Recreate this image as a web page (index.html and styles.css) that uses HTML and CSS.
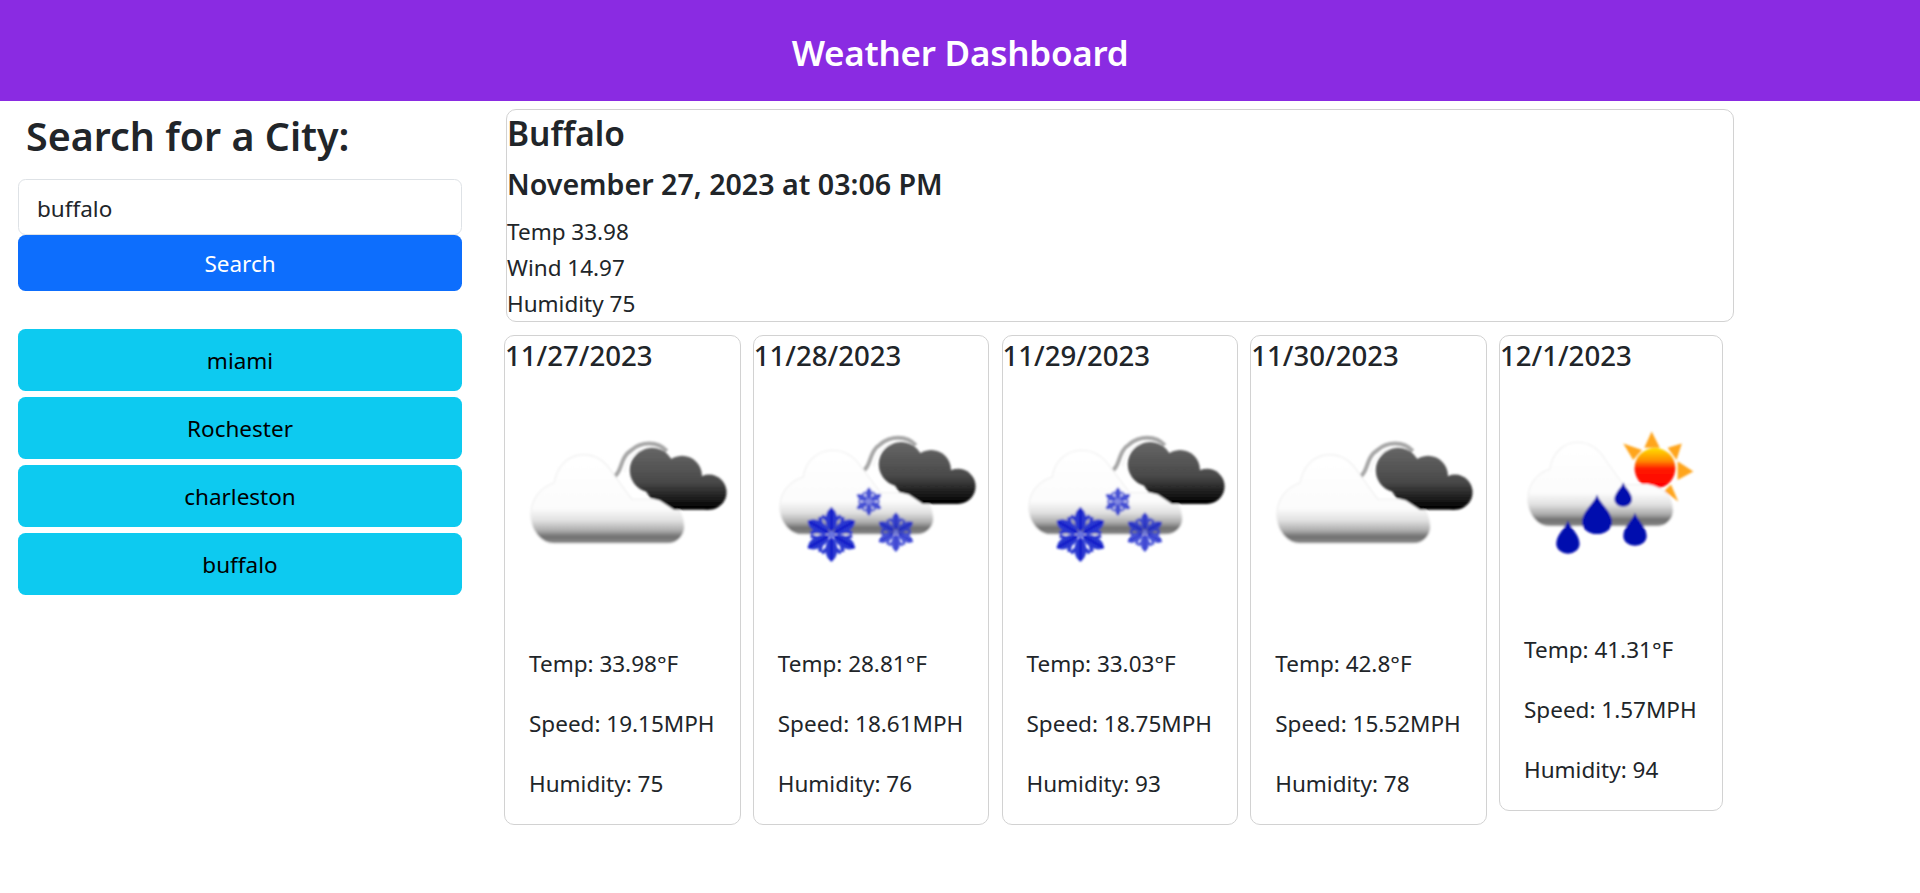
FILE: index.html
```html
<!DOCTYPE html>
<html lang="en">
<head>
<meta charset="utf-8">
<title>Weather Dashboard</title>
<link rel="stylesheet" href="styles.css">
</head>
<body>
<svg class="defs" aria-hidden="true">
  <defs>
    <filter id="soft" x="-10%" y="-10%" width="120%" height="120%"><feGaussianBlur stdDeviation="0.55"/></filter>
    <linearGradient id="whiteGrad" gradientUnits="userSpaceOnUse" x1="0" y1="28" x2="0" y2="66">
      <stop offset="0" stop-color="#fff"/><stop offset=".6" stop-color="#fcfcfc"/><stop offset=".74" stop-color="#e0e0e0"/>
      <stop offset=".85" stop-color="#adadad"/><stop offset=".92" stop-color="#707070"/><stop offset=".98" stop-color="#858585"/><stop offset="1" stop-color="#c8c8c8"/>
    </linearGradient>
    <linearGradient id="darkGrad" gradientUnits="userSpaceOnUse" x1="0" y1="25" x2="0" y2="51">
      <stop offset="0" stop-color="#666"/><stop offset=".55" stop-color="#4a4a4a"/><stop offset=".85" stop-color="#1a1a1a"/><stop offset="1" stop-color="#000"/>
    </linearGradient>
    <linearGradient id="sunGrad" gradientUnits="userSpaceOnUse" x1="0" y1="27" x2="0" y2="45">
      <stop offset="0" stop-color="#ffd800"/><stop offset=".3" stop-color="#ff8a00"/><stop offset=".5" stop-color="#ff1800"/><stop offset="1" stop-color="#f00"/>
    </linearGradient>
    <g id="cloudWhite">
      <path fill="url(#whiteGrad)" stroke="#efefef" stroke-width=".5" d="M21 66C15 66 11 60 11 54C11 47 15 42 21 40C22 33 27 28 33.5 28C39 28 43 31 46 36L54 47L65 47C72 48 76.5 53 76.5 59C76.5 63 73 66 69 66Z"/>
    </g>
    <g id="cloudDark">
      <path fill="none" stroke="#a6a6a6" stroke-width="1.7" d="M47 37C50 35 49 29 54 26C58 22.5 65 22 69 26.5"/>
      <path fill="none" stroke="#f4f4f4" stroke-width=".6" d="M51 35.5C51.5 30.5 55 27 59 25.8"/>
      <g fill="url(#darkGrad)">
        <circle cx="62.7" cy="34.6" r="9.5"/>
        <circle cx="75.5" cy="37" r="8.5"/>
        <circle cx="87" cy="44" r="7.5"/>
        <path d="M55 36L87 40L87 51.5L72 51.5L66 47.5L62 46.5Z"/>
      </g>
    </g>
    <g id="spoke">
      <ellipse cx="0" cy="-6.4" rx="2.5" ry="4.8" fill="#2a38d0"/>
      <path d="M0-4.5L-4-8M0-4.5L4-8" stroke="#2a38d0" stroke-width="1.5" fill="none"/>
      <path d="M0 0V-11.5" stroke="#0a14c8" stroke-width="1"/>
    </g>
    <g id="flake">
      <use href="#spoke"/>
      <use href="#spoke" transform="rotate(60)"/>
      <use href="#spoke" transform="rotate(120)"/>
      <use href="#spoke" transform="rotate(180)"/>
      <use href="#spoke" transform="rotate(240)"/>
      <use href="#spoke" transform="rotate(300)"/>
      <circle r="1.4" fill="#6a74e0"/>
    </g>
    <path id="drop" fill="#0008ae" d="M0-10C1 -6 5 -3 5 2A5 5 0 0 1-5 2C-5-3-1-6 0-10Z"/>
    <symbol id="iconCloud" viewBox="0 0 100 100">
      <g filter="url(#soft)"><use href="#cloudWhite"/><use href="#cloudDark"/></g>
    </symbol>
    <symbol id="iconSnow" viewBox="0 0 100 100">
      <g filter="url(#soft)">
        <g transform="translate(0 -2.5)"><use href="#cloudWhite" transform="translate(0 2) scale(1 .95)"/><use href="#cloudDark"/></g>
        <use href="#flake" transform="translate(33 62)"/>
        <use href="#flake" transform="translate(49 48) scale(.52)" opacity=".8"/>
        <use href="#flake" transform="translate(60.5 61) scale(.72)" opacity=".85"/>
      </g>
    </symbol>
    <symbol id="iconRain" viewBox="0 0 100 100">
      <g filter="url(#soft)">
        <g fill="#ffa51f">
          <path d="M65 26.5L68.3 19.2L72 26.5Z"/><path d="M75.5 26.5L81.9 24.5L79.5 32Z"/><path d="M80 32.5L87.1 37.2L80 41Z"/>
          <path d="M77 43L80.3 50.7L74 46Z"/><path d="M60 32L55.5 24.5L64 27.5Z"/>
        </g>
        <circle cx="69.8" cy="35.7" r="9.2" fill="url(#sunGrad)"/>
        <use href="#cloudWhite" transform="translate(1.5 -4)"/>
        <use href="#drop" transform="translate(43.7 58) scale(1.35 1.05)"/>
        <use href="#drop" transform="translate(55.5 48.5) scale(.8 .65)"/>
        <use href="#drop" transform="translate(60.8 64.5) scale(1.05 .88)"/>
        <use href="#drop" transform="translate(30.6 68) scale(1.05 .88)"/>
      </g>
    </symbol>
  </defs>
</svg>
<header class="banner"><h1 class="banner-title">Weather Dashboard</h1></header>
<div class="layout">
  <aside class="sidebar">
    <h2 class="search-heading">Search for a City:</h2>
    <form class="search-form">
      <input class="search-input" type="text" value="buffalo">
      <button class="btn btn-primary" type="button">Search</button>
    </form>
    <div class="history">
      <button class="btn btn-history" type="button">miami</button>
      <button class="btn btn-history" type="button">Rochester</button>
      <button class="btn btn-history" type="button">charleston</button>
      <button class="btn btn-history" type="button">buffalo</button>
    </div>
  </aside>
  <main class="content">
    <section class="current">
      <h2 class="current-city">Buffalo</h2>
      <h3 class="current-date">November 27, 2023 at 03:06 PM</h3>
      <p class="current-line">Temp 33.98</p>
      <p class="current-line">Wind 14.97</p>
      <p class="current-line">Humidity 75</p>
    </section>
    <section class="forecast">
      <article class="day">
        <h4 class="day-date">11/27/2023</h4>
        <svg class="day-icon" viewBox="0 0 100 100"><use href="#iconCloud"/></svg>
        <div class="day-body"><p>Temp: 33.98°F</p><p>Speed: 19.15MPH</p><p>Humidity: 75</p></div>
      </article>
      <article class="day">
        <h4 class="day-date">11/28/2023</h4>
        <svg class="day-icon" viewBox="0 0 100 100"><use href="#iconSnow"/></svg>
        <div class="day-body"><p>Temp: 28.81°F</p><p>Speed: 18.61MPH</p><p>Humidity: 76</p></div>
      </article>
      <article class="day">
        <h4 class="day-date">11/29/2023</h4>
        <svg class="day-icon" viewBox="0 0 100 100"><use href="#iconSnow"/></svg>
        <div class="day-body"><p>Temp: 33.03°F</p><p>Speed: 18.75MPH</p><p>Humidity: 93</p></div>
      </article>
      <article class="day">
        <h4 class="day-date">11/30/2023</h4>
        <svg class="day-icon" viewBox="0 0 100 100"><use href="#iconCloud"/></svg>
        <div class="day-body"><p>Temp: 42.8°F</p><p>Speed: 15.52MPH</p><p>Humidity: 78</p></div>
      </article>
      <article class="day day-narrow">
        <h4 class="day-date">12/1/2023</h4>
        <svg class="day-icon" viewBox="0 0 100 100"><use href="#iconRain"/></svg>
        <div class="day-body"><p>Temp: 41.31°F</p><p>Speed: 1.57MPH</p><p>Humidity: 94</p></div>
      </article>
    </section>
  </main>
</div>
</body>
</html>
```

FILE: styles.css
```css
* { box-sizing: border-box; }
html, body { margin: 0; padding: 0; }
body {
  font-family: "Noto Sans", "Open Sans", sans-serif;
  font-size: 22.5px;
  line-height: 30px;
  color: #212529;
  background: #fff;
}
.defs { display: block; width: 0; height: 0; }
h1, h2, h3, h4, p { margin: 0; }

.banner {
  height: 101px;
  padding-top: 4px;
  background: #8a2be2;
  display: flex;
  align-items: center;
  justify-content: center;
}
.banner-title {
  font-size: 35px;
  line-height: 42px;
  font-weight: 600;
  color: #fff;
  letter-spacing: -0.25px;
}

.layout {
  display: flex;
  align-items: flex-start;
  padding-left: 18px;
}
.sidebar {
  width: 444px;
  flex: none;
  margin-right: 42px;
}
.search-heading {
  font-size: 39.4px;
  line-height: 48px;
  font-weight: 600;
  padding: 11px 0 0 8px;
  margin-bottom: 19px;
}
.search-form { display: flex; flex-direction: column; }
.search-input {
  height: 56px;
  width: 100%;
  padding: 2px 18px 0;
  border: 1px solid #dee2e6;
  border-radius: 7.5px;
  font: inherit;
  color: #212529;
  background: #fff;
  outline: none;
}
.btn {
  display: block;
  width: 100%;
  border: 0;
  border-radius: 7.5px;
  padding: 2px 0 0;
  font: inherit;
  text-align: center;
}
.btn-primary {
  height: 56px;
  background: #0d6efd;
  color: #fff;
}
.history {
  display: flex;
  flex-direction: column;
  gap: 6px;
  margin-top: 38px;
}
.btn-history {
  height: 62px;
  background: #0dcaf0;
  color: #000;
}

.content { width: 1232px; flex: none; }
.current {
  margin: 8px 0 0 2px;
  width: 1228px;
  height: 213px;
  padding: 0;
  border: 1px solid #d2d2d2;
  border-radius: 10px;
}
.current-city {
  font-size: 33.5px;
  line-height: 44px;
  font-weight: 600;
  margin-top: 1px;
}
.current-date {
  font-size: 28.6px;
  line-height: 38px;
  font-weight: 600;
  margin: 10px 0 11px;
}
.current-line { line-height: 36px; }

.forecast {
  display: flex;
  align-items: flex-start;
  gap: 12.25px;
  margin-top: 13px;
}
.day {
  width: 236.5px;
  flex: none;
  border: 1px solid #d2d2d2;
  border-radius: 10px;
}
.day-narrow { width: 224px; }
.day-narrow .day-body { padding-top: 24px; }
.day-date {
  font-size: 27.6px;
  line-height: 38px;
  font-weight: 500;
  height: 53px;
}
.day-icon { display: block; width: 100%; aspect-ratio: 1; }
.day-body { padding: 25px 24px; }
.day-body p { margin-bottom: 30px; white-space: nowrap; }
.day-body p:last-child { margin-bottom: 0; }
```
